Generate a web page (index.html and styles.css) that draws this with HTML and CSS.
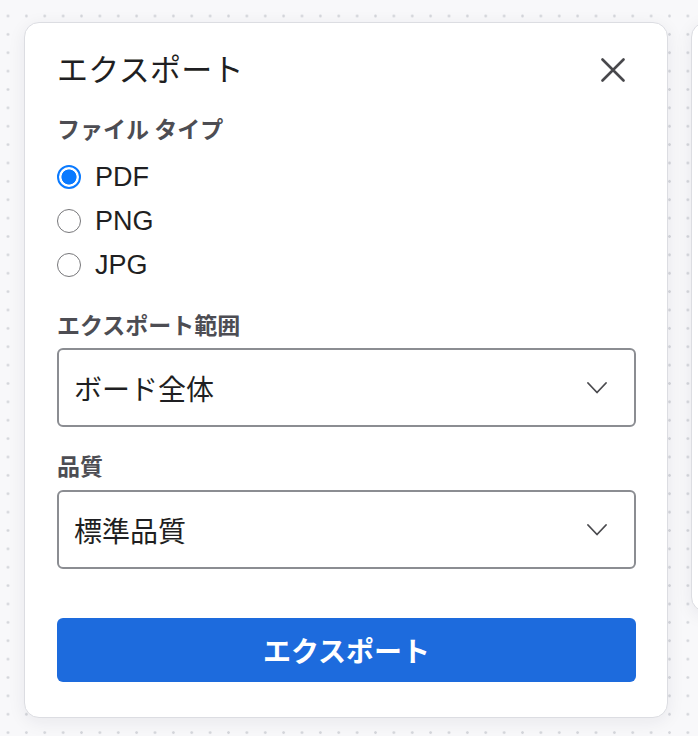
FILE: index.html
```html
<!DOCTYPE html>
<html lang="ja">
<head>
<meta charset="utf-8">
<title>エクスポート</title>
<link rel="stylesheet" href="styles.css">
</head>
<body>
<div class="canvas">
  <section class="card">
    <header class="card-head">
      <h1 class="title">エクスポート</h1>
      <button class="close" aria-label="閉じる">
        <svg width="24" height="24" viewBox="0 0 24 24"><path d="M1.5 1.5 L22.5 22.5 M22.5 1.5 L1.5 22.5" stroke="#48484c" stroke-width="2.6" stroke-linecap="round" fill="none"/></svg>
      </button>
    </header>

    <div class="label label-first">ファイル タイプ</div>
    <div class="radios">
      <label class="radio-row"><span class="radio checked"></span><span class="radio-text">PDF</span></label>
      <label class="radio-row"><span class="radio"></span><span class="radio-text">PNG</span></label>
      <label class="radio-row"><span class="radio"></span><span class="radio-text">JPG</span></label>
    </div>

    <div class="label label-range">エクスポート範囲</div>
    <div class="select select-range">
      <span class="select-text">ボード全体</span>
      <svg class="chev" width="20" height="12" viewBox="0 0 20 12"><path d="M1 1 L10 10.5 L19 1" stroke="#4a4a4e" stroke-width="1.8" fill="none" stroke-linecap="round" stroke-linejoin="round"/></svg>
    </div>

    <div class="label label-quality">品質</div>
    <div class="select select-quality">
      <span class="select-text">標準品質</span>
      <svg class="chev" width="20" height="12" viewBox="0 0 20 12"><path d="M1 1 L10 10.5 L19 1" stroke="#4a4a4e" stroke-width="1.8" fill="none" stroke-linecap="round" stroke-linejoin="round"/></svg>
    </div>

    <button class="export-btn">エクスポート</button>
  </section>
  <section class="card-side"></section>
</div>
</body>
</html>
```

FILE: styles.css
```css
html, body {
  margin: 0;
  padding: 0;
}
body {
  width: 698px;
  height: 736px;
  overflow: hidden;
  background-color: #f8f8fa;
  background-image: radial-gradient(circle, #d4d6db 1px, rgba(212,214,219,0) 1.6px);
  background-size: 18.375px 18.375px;
  background-position: -1.19px 6.81px;
  font-family: "Liberation Sans", "Noto Sans CJK JP", sans-serif;
  color: #1d1d1f;
}
.canvas {
  width: 698px;
  height: 736px;
  box-sizing: border-box;
  overflow: hidden;
  display: flex;
  align-items: flex-start;
  gap: 23px;
  padding: 22px 0 0 24px;
}
.card {
  flex: 0 0 auto;
  width: 644px;
  box-sizing: border-box;
  background: #fff;
  border: 1px solid #dcdde2;
  border-radius: 15px;
  box-shadow: 0 4px 18px rgba(30, 35, 60, 0.07);
  padding: 25px 31px 35px 32px;
  display: flex;
  flex-direction: column;
}
.card-side {
  flex: 0 0 auto;
  width: 200px;
  height: 590px;
  box-sizing: border-box;
  background: #fff;
  border: 1px solid #dcdde2;
  border-radius: 15px;
  box-shadow: 0 4px 18px rgba(30, 35, 60, 0.07);
}
.card-head {
  display: flex;
  align-items: center;
  justify-content: space-between;
  height: 40px;
}
.title {
  margin: 0;
  font-family: "Noto Sans CJK JP", sans-serif;
  font-weight: 400;
  font-size: 31px;
  line-height: 40px;
  color: #1f1f22;
  letter-spacing: 0.3px;
}
.close {
  border: 0;
  background: none;
  padding: 0;
  margin-right: 11px;
  margin-top: 4px;
  width: 24px;
  height: 24px;
  display: flex;
}
.label {
  font-family: "Noto Sans CJK JP", sans-serif;
  font-weight: 700;
  font-size: 23px;
  line-height: 30px;
  color: #4d4d53;
}
.label-first { margin-top: 25px; }
.label-range { margin-top: 22px; }
.label-quality { margin-top: 23px; }
.radios {
  margin-top: 12px;
  display: flex;
  flex-direction: column;
}
.radio-row {
  display: flex;
  align-items: center;
  height: 44px;
  gap: 14px;
}
.radio {
  width: 24px;
  height: 24px;
  box-sizing: border-box;
  border-radius: 50%;
  border: 1.8px solid #77777a;
  background: #fff;
  flex: 0 0 auto;
}
.radio.checked {
  border: 2.5px solid #0a7aff;
  background: radial-gradient(circle, #0a7aff 0 7.2px, #fff 7.9px);
}
.radio-text {
  font-family: "Liberation Sans", sans-serif;
  font-size: 27px;
  line-height: 44px;
  color: #1f1f22;
}
.select {
  box-sizing: border-box;
  height: 79px;
  border: 2px solid #8b8d92;
  border-radius: 6px;
  display: flex;
  align-items: center;
  justify-content: space-between;
  padding: 0 27px 0 15px;
}
.select-range { margin-top: 9px; }
.select-quality { margin-top: 10px; }
.select-text {
  font-family: "Noto Sans CJK JP", sans-serif;
  font-size: 28px;
  color: #1f1f22;
}
.chev { margin-top: 1px; }
.export-btn {
  margin-top: 49px;
  height: 64px;
  border: 0;
  border-radius: 6px;
  background: #1d6bdd;
  color: #fff;
  font-family: "Noto Sans CJK JP", sans-serif;
  font-weight: 700;
  font-size: 28px;
  padding: 0;
}
```
